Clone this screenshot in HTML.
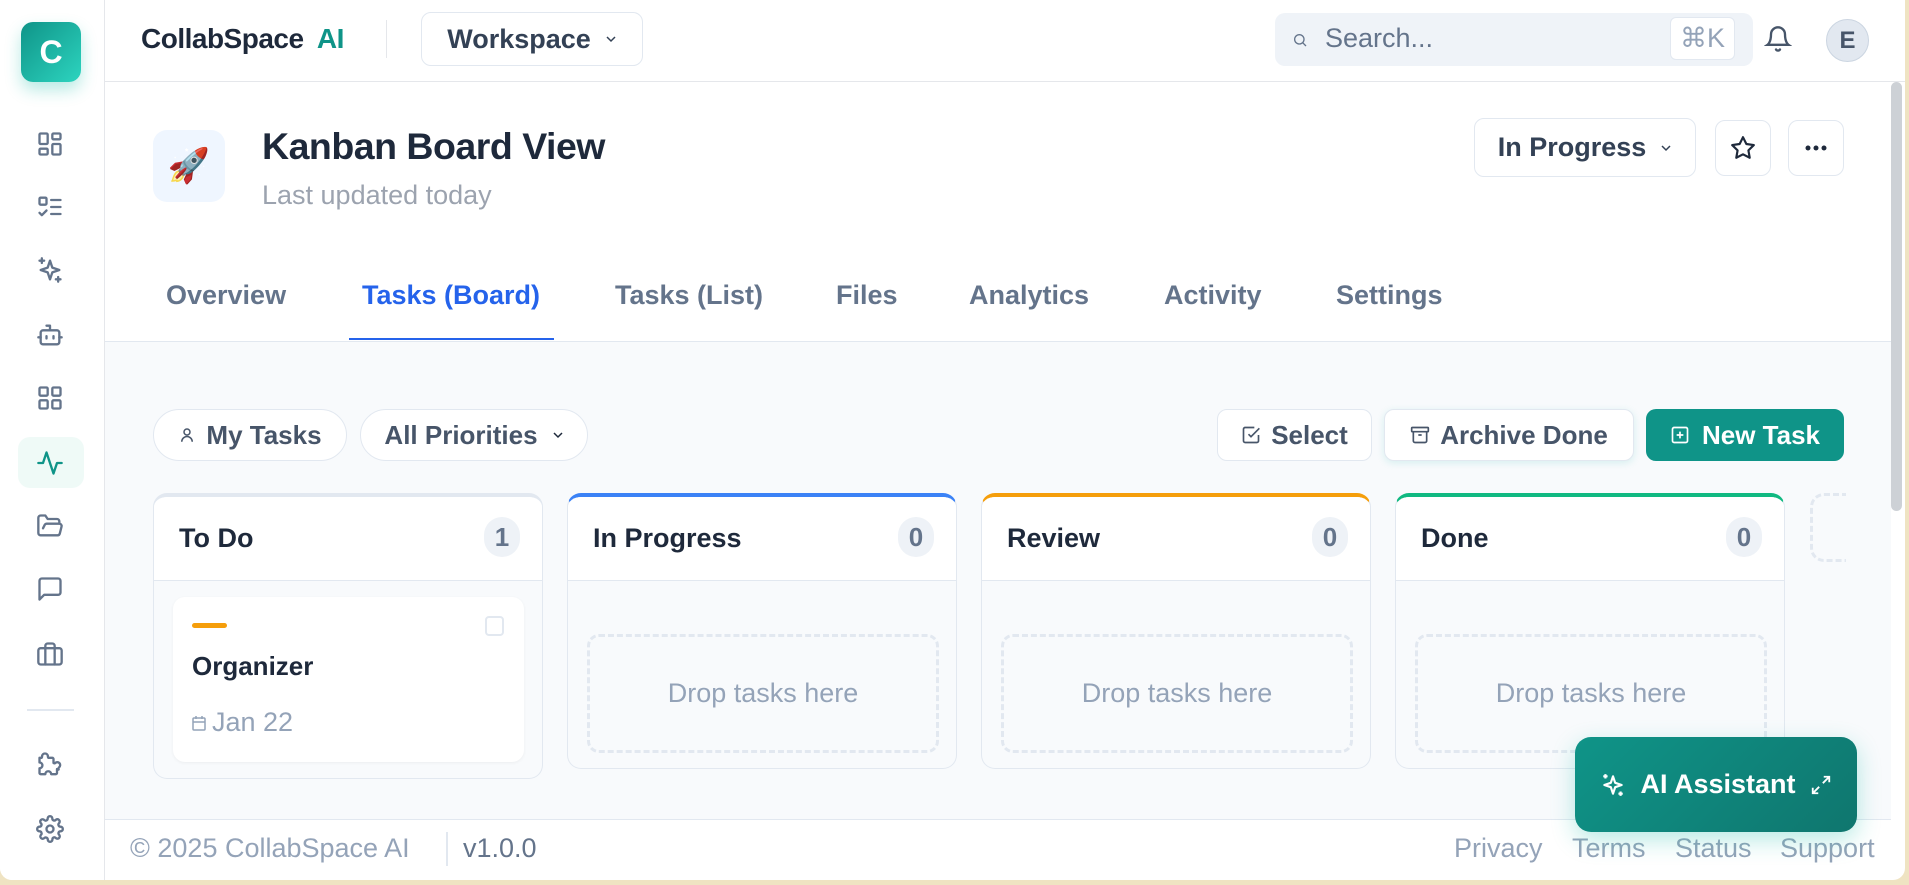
<!DOCTYPE html>
<html><head><meta charset="utf-8"><style>
*{box-sizing:border-box;margin:0;padding:0}
body{width:1909px;height:885px;background:#efe3c2;font-family:"Liberation Sans",sans-serif;position:relative;overflow:hidden}
.app{position:absolute;left:0;top:0;width:1905px;height:880px;background:#fff;border-radius:0 0 12px 12px;overflow:hidden}
.abs{position:absolute}
.side{left:0;top:0;width:105px;height:880px;border-right:1px solid #e5e7eb;background:#fff}
.ico{position:absolute;left:36px;width:28px;height:28px}
.ico svg{width:28px;height:28px;fill:none;stroke:#64748b;stroke-width:2;stroke-linecap:round;stroke-linejoin:round}
.btn{position:absolute;border:1px solid #e2e8f0;border-radius:10px;background:#fff;display:flex;align-items:center;justify-content:center;font-weight:bold;color:#475569;font-size:26px}
.chev{margin-left:14px}
.tab{position:absolute;top:280px;font-size:27px;font-weight:bold;color:#64748b}
.col{position:absolute;top:493px;width:390px;background:#f8fafc;border:1px solid #e2e8f0;border-radius:14px;overflow:hidden}
.colh{height:84px;background:#fff;border-bottom:1px solid #e2e8f0;position:relative}
.colh b{position:absolute;left:25px;top:26px;font-size:27px;color:#1e293b}
.badge{position:absolute;right:22px;top:20px;width:36px;height:40px;border-radius:18px;background:#eef2f7;color:#64748b;font-size:26px;font-weight:bold;text-align:center;line-height:40px}
.drop{position:absolute;left:19px;top:137px;width:352px;height:119px;border:3px dashed #e2e8f0;border-radius:12px;color:#94a3b8;font-size:27px;text-align:center;line-height:113px}
.foot{position:absolute;top:833px;font-size:27px;color:#94a3b8}
</style></head><body>
<div class="app">
<div class="abs side">
 <div class="abs" style="left:21px;top:22px;width:60px;height:60px;border-radius:12px;background:linear-gradient(135deg,#0f9488,#2dd4bf);box-shadow:0 8px 16px rgba(20,184,166,.3);color:#fff;font-size:32px;font-weight:bold;text-align:center;line-height:60px">C</div>
 <div class="ico" style="top:130px"><svg viewBox="0 0 24 24"><rect x="3" y="3" width="7" height="9" rx="1"/><rect x="14" y="3" width="7" height="5" rx="1"/><rect x="14" y="12" width="7" height="9" rx="1"/><rect x="3" y="16" width="7" height="5" rx="1"/></svg></div>
 <div class="ico" style="top:193px"><svg viewBox="0 0 24 24"><rect x="3" y="4" width="6" height="6" rx="1"/><path d="M3 17l2 2 4-4M13 6h8M13 12h8M13 18h8"/></svg></div>
 <div class="ico" style="top:256px"><svg viewBox="0 0 24 24"><path d="M12 4l2 6 6 2-6 2-2 6-2-6-6-2 6-2z"/><path d="M5 2v4M3 4h4M19 18v4M17 20h4"/></svg></div>
 <div class="ico" style="top:321px"><svg viewBox="0 0 24 24"><rect x="4" y="8" width="16" height="12" rx="2"/><path d="M12 8V4H9M2 14h2M20 14h2M9 13v2M15 13v2"/></svg></div>
 <div class="ico" style="top:384px"><svg viewBox="0 0 24 24"><rect x="3" y="3" width="7" height="7" rx="1"/><rect x="14" y="3" width="7" height="7" rx="1"/><rect x="3" y="14" width="7" height="7" rx="1"/><rect x="14" y="14" width="7" height="7" rx="1"/></svg></div>
 <div class="abs" style="left:18px;top:437px;width:66px;height:51px;border-radius:12px;background:#effaf7"></div>
 <div class="ico" style="top:449px"><svg viewBox="0 0 24 24" style="stroke:#0f9488"><path d="M22 12h-4l-3 9L9 3l-3 9H2"/></svg></div>
 <div class="ico" style="top:512px"><svg viewBox="0 0 24 24"><path d="M6 14l1.5-3A2 2 0 019.2 10H20a2 2 0 011.9 2.5l-1.5 6A2 2 0 0118.5 20H4a2 2 0 01-2-2V5a2 2 0 012-2h4l2 3h8a2 2 0 012 2v2"/></svg></div>
 <div class="ico" style="top:575px"><svg viewBox="0 0 24 24"><path d="M21 15a2 2 0 01-2 2H7l-4 4V5a2 2 0 012-2h14a2 2 0 012 2z"/></svg></div>
 <div class="ico" style="top:640px"><svg viewBox="0 0 24 24"><rect x="2" y="7" width="20" height="14" rx="2"/><path d="M16 21V5a2 2 0 00-2-2h-4a2 2 0 00-2 2v16"/></svg></div>
 <div class="abs" style="left:27px;top:709px;width:47px;height:2px;background:#e2e8f0"></div>
 <div class="ico" style="top:752px"><svg viewBox="0 0 24 24"><path d="M19.4 15a1.7 1.7 0 01.3-1.8 2.5 2.5 0 10-3.5-3.5A1.7 1.7 0 0115 9.4V6a1 1 0 00-1-1h-3.4a1.7 1.7 0 01-.4-1.2 2.5 2.5 0 10-5 0 1.7 1.7 0 01-.4 1.2H3v4a2.5 2.5 0 110 5v4a1 1 0 001 1h4a2.5 2.5 0 115 0h4a1 1 0 001-1v-3.4"/></svg></div>
 <div class="ico" style="top:815px"><svg viewBox="0 0 24 24"><circle cx="12" cy="12" r="3"/><path d="M19.4 15a1.65 1.65 0 00.33 1.82l.06.06a2 2 0 11-2.83 2.83l-.06-.06a1.65 1.65 0 00-2.82 1.17V21a2 2 0 11-4 0v-.09A1.65 1.65 0 009 19.4a1.65 1.65 0 00-1.82.33l-.06.06a2 2 0 11-2.830-2.83l.06-.06A1.65 1.65 0 004.6 15 1.65 1.65 0 003 14H3a2 2 0 110-4h.09A1.65 1.65 0 004.6 9a1.65 1.65 0 00-.33-1.82l-.06-.06a2 2 0 112.83-2.83l.06.06A1.65 1.65 0 009 4.6 1.65 1.65 0 0010 3.09V3a2 2 0 114 0v.09a1.65 1.65 0 001 1.51 1.65 1.65 0 001.82-.33l.06-.06a2 2 0 112.83 2.83l-.06.06A1.65 1.65 0 0019.4 9c.26.6.84 1 1.51 1H21a2 2 0 110 4h-.09a1.65 1.65 0 00-1.51 1z"/></svg></div>
</div>
<!-- header -->
<div class="abs" style="left:105px;top:0;width:1800px;height:82px;border-bottom:1px solid #e5e7eb"></div>
<div class="abs" style="left:141px;top:23px;font-size:28px;font-weight:bold;color:#1e293b;letter-spacing:-.5px">CollabSpace <span style="color:#0f9488;margin-left:6px">AI</span></div>
<div class="abs" style="left:386px;top:20px;width:1px;height:38px;background:#e5e7eb"></div>
<div class="btn" style="left:421px;top:12px;width:222px;height:54px;color:#334155;font-size:27px">Workspace <svg class="chev" width="12" height="8" viewBox="0 0 12 8" fill="none" stroke="#334155" stroke-width="1.5"><path d="M2 2l4 4 4-4"/></svg></div>
<div class="abs" style="left:1275px;top:13px;width:478px;height:53px;border-radius:10px;background:#eff3f8"></div>
<svg class="abs" style="left:1292px;top:32px" width="16" height="16" viewBox="0 0 24 24" fill="none" stroke="#64748b" stroke-width="2"><circle cx="11" cy="11" r="7"/><path d="M21 21l-5-5"/></svg>
<div class="abs" style="left:1325px;top:23px;font-size:27px;color:#64748b">Search...</div>
<div class="abs" style="left:1670px;top:17px;width:65px;height:43px;border:1px solid #e2e8f0;border-radius:6px;background:#fff;color:#94a3b8;font-size:27px;text-align:center;line-height:41px">⌘K</div>
<svg class="abs" style="left:1764px;top:25px" width="28" height="28" viewBox="0 0 24 24" fill="none" stroke="#475569" stroke-width="2" stroke-linecap="round"><path d="M18 8a6 6 0 00-12 0c0 7-3 9-3 9h18s-3-2-3-9M13.7 21a2 2 0 01-3.4 0"/></svg>
<div class="abs" style="left:1826px;top:19px;width:43px;height:43px;border-radius:50%;background:#e2e8f0;border:1px solid #cbd5e1;color:#475569;font-weight:bold;font-size:24px;text-align:center;line-height:41px">E</div>
<!-- scrollbar -->
<div class="abs" style="left:1891px;top:82px;width:11px;height:429px;border-radius:6px;background:#cdd1d6"></div>
<!-- title -->
<div class="abs" style="left:153px;top:130px;width:72px;height:72px;border-radius:14px;background:#eff6ff;font-size:34px;text-align:center;line-height:72px">🚀</div>
<div class="abs" style="left:262px;top:125px;font-size:37.5px;font-weight:bold;color:#1e293b;letter-spacing:-.5px">Kanban Board View</div>
<div class="abs" style="left:262px;top:180px;font-size:27px;color:#9ca3af">Last updated today</div>
<div class="btn" style="left:1474px;top:118px;width:222px;height:59px;color:#334155;font-size:27px">In Progress <svg class="chev" width="12" height="8" viewBox="0 0 12 8" fill="none" stroke="#334155" stroke-width="1.5"><path d="M2 2l4 4 4-4"/></svg></div>
<div class="btn" style="left:1715px;top:120px;width:56px;height:56px"><svg width="26" height="26" viewBox="0 0 24 24" fill="none" stroke="#1e293b" stroke-width="2" stroke-linejoin="round"><path d="M12 2l3.1 6.3 6.9 1-5 4.9 1.2 6.8L12 17.8 5.8 21l1.2-6.8-5-4.9 6.9-1z"/></svg></div>
<div class="btn" style="left:1788px;top:120px;width:56px;height:56px"><svg width="24" height="6" viewBox="0 0 24 6" fill="#1e293b"><circle cx="4" cy="3" r="2.5"/><circle cx="12" cy="3" r="2.5"/><circle cx="20" cy="3" r="2.5"/></svg></div>
<!-- tabs -->
<div class="tab" style="left:166px">Overview</div>
<div class="tab" style="left:362px;color:#2563eb">Tasks (Board)</div>
<div class="tab" style="left:615px">Tasks (List)</div>
<div class="tab" style="left:836px">Files</div>
<div class="tab" style="left:969px">Analytics</div>
<div class="tab" style="left:1164px">Activity</div>
<div class="tab" style="left:1336px">Settings</div>
<div class="abs" style="left:105px;top:341px;width:1786px;height:478px;background:#f8fafc;border-top:1px solid #e2e8f0"></div>
<div class="abs" style="left:349px;top:338px;width:205px;height:2px;background:#2563eb"></div>
<!-- filters -->
<div class="btn" style="left:153px;top:409px;width:194px;height:52px;border-radius:26px"><svg width="18" height="18" viewBox="0 0 24 24" fill="none" stroke="#475569" stroke-width="2" style="margin-right:10px"><circle cx="12" cy="8" r="4"/><path d="M5 21a7 7 0 0114 0"/></svg>My Tasks</div>
<div class="btn" style="left:360px;top:409px;width:228px;height:52px;border-radius:26px">All Priorities <svg class="chev" width="12" height="8" viewBox="0 0 12 8" fill="none" stroke="#1e293b" stroke-width="1.5"><path d="M2 2l4 4 4-4"/></svg></div>
<div class="btn" style="left:1217px;top:409px;width:155px;height:52px"><svg width="20" height="20" viewBox="0 0 24 24" fill="none" stroke="#475569" stroke-width="2" style="margin-right:10px"><path d="M9 11l3 3L22 4"/><path d="M21 12v7a2 2 0 01-2 2H5a2 2 0 01-2-2V5a2 2 0 012-2h11"/></svg>Select</div>
<div class="btn" style="left:1384px;top:409px;width:250px;height:52px;box-shadow:0 2px 8px rgba(20,184,166,.15)"><svg width="20" height="20" viewBox="0 0 24 24" fill="none" stroke="#475569" stroke-width="2" style="margin-right:10px"><rect x="2" y="3" width="20" height="5" rx="1"/><path d="M4 8v11a2 2 0 002 2h12a2 2 0 002-2V8M10 12h4"/></svg>Archive Done</div>
<div class="btn" style="left:1646px;top:409px;width:198px;height:52px;background:#0f9488;border-color:#0f9488;color:#fff"><svg width="20" height="20" viewBox="0 0 24 24" fill="none" stroke="#fff" stroke-width="2" style="margin-right:12px"><rect x="3" y="3" width="18" height="18" rx="2"/><path d="M12 8v8M8 12h8"/></svg>New Task</div>
<!-- columns -->
<div class="col" style="left:153px;height:286px;border-top:4px solid #e2e8f0"><div class="colh"><b>To Do</b><div class="badge">1</div></div>
 <div class="abs" style="left:19px;top:100px;width:351px;height:165px;background:#fff;border-radius:12px;box-shadow:0 1px 3px rgba(0,0,0,.05)">
  <div class="abs" style="left:19px;top:26px;width:35px;height:5px;border-radius:3px;background:#f59e0b"></div>
  <div class="abs" style="left:312px;top:19px;width:19px;height:20px;border:2px solid #e2e8f0;border-radius:4px"></div>
  <div class="abs" style="left:19px;top:54px;font-size:26px;font-weight:bold;color:#1e293b">Organizer</div>
  <div class="abs" style="left:19px;top:110px;font-size:27px;color:#94a3b8"><svg width="14" height="16" viewBox="0 0 14 16" fill="none" stroke="#94a3b8" stroke-width="1.5" style="margin-right:6px"><rect x="1" y="3" width="12" height="12" rx="1"/><path d="M1 7h12M4 1v3M10 1v3"/></svg>Jan 22</div>
 </div>
</div>
<div class="col" style="left:567px;height:276px;border-top:4px solid #3b82f6"><div class="colh"><b>In Progress</b><div class="badge">0</div></div><div class="drop">Drop tasks here</div></div>
<div class="col" style="left:981px;height:276px;border-top:4px solid #f59e0b"><div class="colh"><b>Review</b><div class="badge">0</div></div><div class="drop">Drop tasks here</div></div>
<div class="col" style="left:1395px;height:276px;border-top:4px solid #10b981"><div class="colh"><b>Done</b><div class="badge">0</div></div><div class="drop">Drop tasks here</div></div>
<div class="abs" style="left:1810px;top:493px;width:50px;height:69px;border:3px dashed #e2e8f0;border-radius:14px"></div>
<div class="abs" style="left:1846px;top:490px;width:45px;height:80px;background:#f8fafc"></div>
<!-- footer -->
<div class="abs" style="left:105px;top:819px;width:1786px;height:1px;background:#e2e8f0"></div>
<div class="foot" style="left:130px">© 2025 CollabSpace AI</div>
<div class="abs" style="left:446px;top:832px;width:2px;height:34px;background:#e2e8f0"></div>
<div class="foot" style="left:463px;color:#64748b">v1.0.0</div>
<div class="foot" style="left:1454px">Privacy</div>
<div class="foot" style="left:1572px">Terms</div>
<div class="foot" style="left:1675px">Status</div>
<div class="foot" style="left:1780px">Support</div>
<!-- AI button -->
<div class="abs" style="left:1575px;top:737px;width:282px;height:95px;border-radius:16px;background:linear-gradient(135deg,#0f9488,#0f766e);box-shadow:0 8px 24px rgba(20,184,166,.3);color:#fff;font-size:27px;font-weight:bold;display:flex;align-items:center;justify-content:center">
 <svg width="26" height="26" viewBox="0 0 24 24" fill="none" stroke="#fff" stroke-width="2" stroke-linejoin="round" style="margin-right:14px"><path d="M12 4l2 6 6 2-6 2-2 6-2-6-6-2 6-2z"/><path d="M5 2v4M3 4h4M19 18v4M17 20h4"/></svg>AI Assistant
 <svg width="22" height="22" viewBox="0 0 24 24" fill="none" stroke="#fff" stroke-width="2" style="margin-left:14px"><path d="M15 3h6v6M9 21H3v-6M21 3l-7 7M3 21l7-7"/></svg>
</div>
</div>
</body></html>
